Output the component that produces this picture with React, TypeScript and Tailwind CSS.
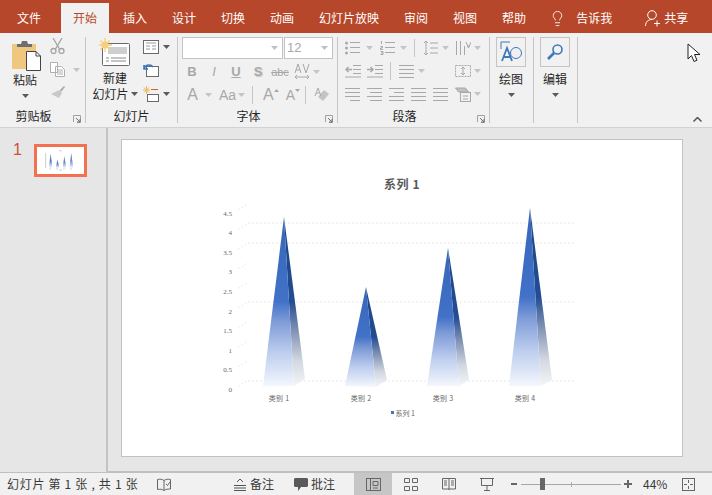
import { Fragment } from 'react';
import { Lightbulb } from 'lucide-react';

const tabs = ['插入', '设计', '切换', '动画', '幻灯片放映', '审阅', '视图', '帮助'];
const DIM = '#a8a8a8';
const SOFT = '#c4c4c4';

function Caret({ color = '#5a5a5a' }: { color?: string }) {
  return (
    <svg width="7" height="4" viewBox="0 0 7 4" className="shrink-0">
      <path d="M0 0h7L3.5 4z" fill={color} />
    </svg>
  );
}

function Lines({ w = 15, rows = [0, 4, 8, 12], insets = [] as number[] }) {
  return (
    <svg width={w} height="14" viewBox={`0 0 ${w} 14`}>
      {rows.map((y, i) => (
        <path key={y} d={`M${insets[i] ?? 0} ${y + 1.5}H${w}`} stroke={DIM} strokeWidth="1" />
      ))}
    </svg>
  );
}

function Bullets() {
  return (
    <svg width="15" height="14" viewBox="0 0 15 14" fill={DIM}>
      <circle cx="1.500" cy="2" r="1.500" />
      <circle cx="1.500" cy="7" r="1.500" />
      <circle cx="1.500" cy="12" r="1.500" />
      <path d="M5 1.500h10M5 6.500h10M5 11.500h10" stroke={DIM} fill="none" />
    </svg>
  );
}

function Numbers() {
  return (
    <svg width="15" height="14" viewBox="0 0 15 14" fill="none" stroke={DIM}>
      <path d="M1.500 0v3M.5 5.500h2v1.500h-2v1.500h2.500M.5 10.500h2.500v3H.5M1 12h2" />
      <path d="M5 1.500h10M5 6.500h10M5 11.500h10" />
    </svg>
  );
}

function Indent({ out }: { out?: boolean }) {
  return (
    <svg width="16" height="14" viewBox="0 0 16 14" fill="none" stroke={DIM}>
      <path d="M8 1.500h8M8 5.500h8M8 9.500h8M0 13h16" />
      {out ? (
        <path d="M7 5.500H1M3.500 3L1 5.500 3.500 8" strokeWidth="1.500" />
      ) : (
        <path d="M0 5.500h6M3.500 3L6 5.500 3.500 8" strokeWidth="1.500" />
      )}
    </svg>
  );
}

function Launcher() {
  return (
    <svg width="8" height="8" viewBox="0 0 8 8" className="absolute bottom-0 right-[4px]">
      <path d="M.5 7V.5H7.5V7.5H4" fill="none" stroke="#a0a0a0" />
      <path d="M3 3l4 4M7 4v3H4" fill="none" stroke="#707070" />
    </svg>
  );
}

function Group({ width, label, launcher, children }: { width: string; label?: string; launcher?: boolean; children: React.ReactNode }) {
  return (
    <div className={`relative flex h-[86px] shrink-0 flex-col border-r border-[#c6c6c6] ${width}`}>
      <div className="h-[68px] shrink-0">{children}</div>
      {label && (
        <div className={`pt-[3px] text-center text-[12px] leading-[16px] text-[#262626] ${launcher ? 'pr-[18px]' : ''}`}>{label}</div>
      )}
      {launcher && <Launcher />}
    </div>
  );
}

function Cell({ children }: { children: React.ReactNode }) {
  return <div className="flex h-full w-[22px] shrink-0 items-center justify-center">{children}</div>;
}

function PasteIcon() {
  return (
    <svg width="30" height="32" viewBox="0 0 30 32">
      <rect x="0" y="4" width="24" height="25" fill="#f0c77f" />
      <path d="M5 7V4h4l1-3h5l1 3h4v3z" fill="#6e6e6e" />
      <path d="M14.500 11.500H24l4.500 4.500V30.500H14.500z" fill="#fff" stroke="#444" />
      <path d="M24 11.500V16h4.500" fill="none" stroke="#444" />
    </svg>
  );
}

function NewSlideIcon() {
  return (
    <svg width="32" height="30" viewBox="0 0 32 30">
      <rect x="3.500" y="5.500" width="27" height="22" rx="1" fill="#fff" stroke="#6a6a6a" />
      <rect x="9" y="9" width="19" height="7" fill="#cfcfcf" />
      <path d="M7 20h3M12 20h15M7 23h3M12 23h15" stroke="#8a8a8a" />
      <circle cx="6" cy="7" r="3.500" fill="#f6cf7d" />
      <path d="M6 0v14M0 7h13M1.500 2.500l9 9M10.500 2.500l-9 9" stroke="#f6cf7d" strokeWidth="1.300" />
    </svg>
  );
}

const pyramids = [
  { apex: [284, 217], left: [263, 386], mid: [294, 386], right: [305, 379] },
  { apex: [366, 287], left: [345, 386], mid: [376, 387], right: [387, 380] },
  { apex: [448, 248], left: [427, 386], mid: [459, 386], right: [469, 380] },
  { apex: [530, 208], left: [509, 386], mid: [541, 386], right: [552, 380] },
];

const axis = ['4.5', '4', '3.5', '3', '2.5', '2', '1.5', '1', '0.5', '0'];
const cats = [
  ['类别 1', 279],
  ['类别 2', 361],
  ['类别 3', 443],
  ['类别 4', 525],
] as const;

function Chart({ className, mini }: { className: string; mini?: boolean }) {
  return (
    <svg viewBox="122 140 560 316" className={className}>
      {!mini && (
        <defs>
          <linearGradient id="pyr-blue" x1="0" y1="0" x2="0" y2="1">
            <stop offset="0" stopColor="#3566b8" />
            <stop offset="0.5" stopColor="#4272c8" />
            <stop offset="0.62" stopColor="#7f9cd8" />
            <stop offset="0.8" stopColor="#bccdee" />
            <stop offset="1" stopColor="#f4f7fd" />
          </linearGradient>
          <linearGradient id="pyr-dark" x1="0" y1="0" x2="0" y2="1">
            <stop offset="0" stopColor="#1d4488" />
            <stop offset="0.5" stopColor="#234c92" />
            <stop offset="0.66" stopColor="#7a8db0" />
            <stop offset="0.85" stopColor="#d2d7e0" />
            <stop offset="1" stopColor="#f4f5f7" />
          </linearGradient>
        </defs>
      )}
      {mini ? (
        <path d="M385 182h34M225 210v180M270 398h20M352 398h20M434 398h20M516 398h20M385 412h34" stroke="#8a8a8a" strokeWidth="5" />
      ) : (
        <Fragment>
          <text x="402" y="189" textAnchor="middle" fontSize="12" fontWeight="700" fill="#595959" letterSpacing=".6">
            系列 1
          </text>
          {[223, 243, 302, 381].map((y) => (
            <path key={y} d={`M248 ${y}H576`} stroke="#e8e8e8" strokeDasharray="2 2" />
          ))}
          {axis.map((t, i) => {
            const y = 213 + i * 19.6;
            return (
              <Fragment key={t}>
                <text x="232" y={y + 2.500} textAnchor="end" fontSize="7" fill="#666" fontFamily="'Liberation Serif', serif">
                  {t}
                </text>
                <path d={`M238 ${y - 3}L248 ${y - 9}`} stroke="#ececec" strokeDasharray="2 2" />
              </Fragment>
            );
          })}
          {cats.map(([t, x]) => (
            <text key={t} x={x} y="401" textAnchor="middle" fontSize="7" fill="#666" letterSpacing=".3">
              {t}
            </text>
          ))}
          <rect x="391" y="411" width="3" height="3" fill="#4472c4" />
          <text x="395.500" y="416" fontSize="7" fill="#666">
            系列 1
          </text>
        </Fragment>
      )}
      {pyramids.map((p) => (
        <g key={p.apex[0]}>
          <polygon points={`${p.apex} ${p.mid} ${p.right}`} fill="url(#pyr-dark)" />
          <polygon points={`${p.apex} ${p.left} ${p.mid}`} fill="url(#pyr-blue)" />
        </g>
      ))}
    </svg>
  );
}

export default function App() {
  return (
    <div
      className="flex h-[495px] w-[712px] flex-col overflow-hidden bg-[#e6e6e6] text-[#262626]"
      style={{ fontFamily: "'Noto Sans CJK SC', 'Noto Sans', sans-serif" }}
    >
      {/* title tabs */}
      <div className="flex h-[33px] shrink-0 items-end bg-[#b7472a] pl-[5px] text-[12px] text-white">
        <div className="mr-[8px] flex h-[30px] w-[48px] items-center justify-center">文件</div>
        <div className="mr-[2px] flex h-[30px] w-[48px] items-center justify-center bg-[#f1f1f1] text-[#b7472a]">开始</div>
        {tabs.map((t) => (
          <div key={t} className="mr-px flex h-[30px] items-center justify-center px-[12px]">
            {t}
          </div>
        ))}
        <div className="ml-[10px] flex h-[30px] items-center">
          <Lightbulb size={17} strokeWidth={1.2} />
        </div>
        <div className="ml-[10px] flex h-[30px] items-center">告诉我</div>
        <div className="ml-[33px] flex h-[30px] items-center">
          <svg width="16" height="17" viewBox="0 0 16 17" fill="none" stroke="#fff">
            <circle cx="7" cy="5" r="4.300" />
            <path d="M.5 16c0-4 2.500-6.500 6.500-6.500M9 13.500h6M12 10.500v6" />
          </svg>
        </div>
        <div className="ml-[3px] flex h-[30px] items-center">共享</div>
      </div>

      {/* ribbon */}
      <div className="relative flex h-[95px] shrink-0 items-start border-b border-[#d2d2d2] bg-[#f1f1f1] pt-[4px]">
        <Group width="w-[86px]" label="剪贴板" launcher>
          <div className="flex">
            <div className="ml-[12px] flex w-[30px] flex-col items-center pt-[3px]">
              <PasteIcon />
              <div className="ml-[-4px] mt-[-1px] text-[12px] leading-[18px]">粘贴</div>
              <div className="ml-[-4px] mt-[5px]"><Caret /></div>
            </div>
            <div className="ml-[8px] flex flex-col gap-[8px] pt-[1px]">
              <svg width="15" height="16" viewBox="0 0 15 16" fill="none" stroke="#a4a4a4" strokeWidth="1.300">
                <path d="M3 0l6.500 11M12 0L5.500 11" />
                <circle cx="3.500" cy="13" r="2.500" />
                <circle cx="11.500" cy="13" r="2.500" />
              </svg>
              <div className="flex items-center gap-[7px]">
                <svg width="16" height="15" viewBox="0 0 16 15" fill="#fff" stroke="#b0b0b0">
                  <path d="M.5.5h7v10h-7zM5.500 4.500h6l3 3v7h-9z" />
                  <path d="M7 8h6M7 10h6M7 12h6" />
                </svg>
                <Caret color="#c4c4c4" />
              </div>
              <svg width="16" height="15" viewBox="0 0 16 15">
                <path d="M9 5l3 3-3 5L1 9z" fill="#c8c8c8" />
                <path d="M10 5l4-4 1 1-4 5z" fill="#a8a8a8" />
              </svg>
            </div>
          </div>
        </Group>

        <Group width="w-[92px]" label="幻灯片">
          <div className="flex">
            <div className="ml-[6px] flex w-[46px] flex-col items-center pt-[1px]">
              <NewSlideIcon />
              <div className="mt-[2px] text-[12px] leading-[16px]">新建</div>
              <div className="flex items-center gap-[2px] whitespace-nowrap text-[12px] leading-[16px]">
                幻灯片
                <Caret />
              </div>
            </div>
            <div className="ml-[5px] flex flex-col gap-[9px] pt-[3px]">
              <div className="flex items-center gap-[4px]">
                <svg width="16" height="14" viewBox="0 0 16 14" fill="#fff" stroke="#6a6a6a">
                  <rect x=".5" y=".5" width="15" height="13" />
                  <path d="M3 3h10M3 6h4M3 9h4M9 6h4M9 9h4" stroke="#9a9a9a" />
                </svg>
                <Caret />
              </div>
              <svg width="16" height="14" viewBox="0 0 16 14" fill="none">
                <rect x="3.500" y="3.500" width="12" height="10" fill="#fff" stroke="#6a6a6a" />
                <path d="M1 6c1-5 7-5 9-2M1 2v4h4" stroke="#3f77bb" strokeWidth="1.600" />
              </svg>
              <div className="flex items-center gap-[4px]">
                <svg width="16" height="16" viewBox="0 0 16 16" fill="none">
                  <path d="M3.500 0v8M0 4h7M1 1.500l5 5M6 1.500l-5 5" stroke="#f3b85a" />
                  <path d="M8 3.500h7M4.500 8.500h11" stroke="#d2622a" />
                  <rect x="4.500" y="8.500" width="11" height="7" fill="#fff" stroke="#6a6a6a" />
                </svg>
                <Caret />
              </div>
            </div>
          </div>
        </Group>

        <Group width="w-[160px]" label="字体" launcher>
          <div className="ml-[4px] flex h-[22px]">
            <div className="flex w-[101px] items-center justify-end border border-[#c4c4c4] bg-white pr-[4px]">
              <Caret color="#c0c0c0" />
            </div>
            <div className="ml-px flex w-[49px] items-center justify-between border border-[#c4c4c4] bg-white pl-[2px] pr-[4px] text-[13px] text-[#a8a8a8]" style={{ fontFamily: "'Liberation Sans', sans-serif" }}>
              12
              <Caret color="#c0c0c0" />
            </div>
          </div>
          <div className="ml-[3px] mt-[2px] flex h-[22px] items-center text-[13px] font-bold text-[#a8a8a8]" style={{ fontFamily: "'Liberation Sans', sans-serif" }}>
            <Cell>B</Cell>
            <Cell><span className="font-normal italic">I</span></Cell>
            <Cell><span className="underline">U</span></Cell>
            <Cell><span className="[text-shadow:1px_1px_1px_#c8c8c8]">S</span></Cell>
            <Cell><span className="text-[11px] font-normal line-through">abc</span></Cell>
            <Cell>
              <svg width="16" height="18" viewBox="0 0 16 18" fill="none" stroke={DIM}>
                <path d="M1 10l3-9 3 9M2 7h4M9 1l3 9 3-9M1 14h14M3 12l-2 2 2 2M13 12l2 2-2 2" />
              </svg>
            </Cell>
            <Caret color={SOFT} />
          </div>
          <div className="ml-[5px] mt-px flex h-[22px] items-center text-[#a8a8a8]" style={{ fontFamily: "'Liberation Sans', sans-serif" }}>
            <span className="w-[19px] text-center text-[16px]">A</span>
            <span className="ml-[3px]"><Caret color={SOFT} /></span>
            <span className="ml-[7px] w-[16px] text-center text-[14px]">Aa</span>
            <span className="ml-[3px]"><Caret color={SOFT} /></span>
            <div className="ml-[7px] h-[18px] w-px bg-[#c6c6c6]" />
            <span className="ml-[10px] text-[16px]">A</span>
            <svg width="5" height="3" viewBox="0 0 5 3" className="mb-[10px]"><path d="M0 3h5L2.500 0z" fill={DIM} /></svg>
            <span className="ml-[7px] text-[14px]">A</span>
            <svg width="5" height="3" viewBox="0 0 5 3" className="mb-[10px]"><path d="M0 0h5L2.500 3z" fill={DIM} /></svg>
            <div className="ml-[5px] h-[18px] w-px bg-[#c6c6c6]" />
            <svg width="16" height="16" viewBox="0 0 16 16" className="ml-[8px]">
              <path d="M10 3l5 4-6 7-5-4z" fill="#c4c4c4" />
              <path d="M1 9l3-8 3 8M2 6h4" fill="none" stroke={DIM} />
            </svg>
          </div>
        </Group>

        <Group width="w-[152px]" label="段落" launcher>
          <div className="flex h-[22px] items-center pl-[7px]">
            <Bullets />
            <span className="ml-[6px]"><Caret color={SOFT} /></span>
            <span className="ml-[7px]"><Numbers /></span>
            <span className="ml-[5px]"><Caret color={SOFT} /></span>
            <div className="ml-[7px] h-[18px] w-px bg-[#c6c6c6]" />
            <svg width="15" height="16" viewBox="0 0 15 16" className="ml-[8px]" fill="none" stroke={DIM}>
              <path d="M3 1v14M1 3l2-2 2 2M1 13l2 2 2-2M7 3h8M7 8h8M7 13h8" />
            </svg>
            <span className="ml-[4px]"><Caret color={SOFT} /></span>
            <svg width="16" height="16" viewBox="0 0 16 16" className="ml-[6px]" fill="none" stroke={DIM}>
              <path d="M1.500 1v14M5.500 1v14M9.500 6v9M11 2l2.500 6L16 2M12 6h3" />
            </svg>
            <span className="ml-[3px]"><Caret color={SOFT} /></span>
          </div>
          <div className="mt-[1px] flex h-[22px] items-center pl-[7px]">
            <Indent out />
            <span className="ml-[6px]"><Indent /></span>
            <div className="ml-[7px] h-[18px] w-px bg-[#c6c6c6]" />
            <span className="ml-[8px]"><Lines /></span>
            <span className="ml-[4px]"><Caret color={SOFT} /></span>
            <svg width="16" height="16" viewBox="0 0 16 16" className="ml-[30px]" fill="none" stroke={DIM}>
              <rect x=".5" y="2.500" width="15" height="11" strokeDasharray="2 1" />
              <path d="M8 4v8M6 6l2-2 2 2M6 10l2 2 2-2" />
            </svg>
            <span className="ml-[3px]"><Caret color={SOFT} /></span>
          </div>
          <div className="flex h-[24px] items-center gap-[7px] pl-[7px]">
            <Lines insets={[0, 0, 0, 5]} />
            <Lines insets={[0, 3, 0, 3]} />
            <Lines insets={[0, 5, 0, 0]} />
            <Lines />
            <Lines w={15} />
            <svg width="16" height="16" viewBox="0 0 16 16" fill="none" stroke={DIM}>
              <path d="M.5 2h10l3 4H3.500z" fill="#c0c0c0" />
              <rect x="5.500" y="6.500" width="10" height="9" fill="#f1f1f1" />
              <path d="M8 10h5M8 13h5" />
            </svg>
            <span className="ml-[-4px]"><Caret color={SOFT} /></span>
          </div>
        </Group>

        <Group width="w-[44px]">
          <div className="flex flex-col items-center pr-px">
            <div className="flex h-[30px] w-[30px] items-center justify-center border border-[#c4c4c4]">
              <svg width="22" height="22" viewBox="0 0 22 22" fill="none" stroke="#3f77bb">
                <path d="M1 8V1h9" />
                <circle cx="16" cy="12" r="5.500" />
                <path d="M2 20l5-13 5 13M4 16h6" strokeWidth="1.800" />
              </svg>
            </div>
            <div className="mt-[4px] text-[12px] leading-[16px]">绘图</div>
            <div className="mt-[6px]"><Caret /></div>
          </div>
        </Group>

        <Group width="w-[44px]">
          <div className="flex flex-col items-center pr-px">
            <div className="flex h-[30px] w-[30px] items-center justify-center border border-[#c4c4c4]">
              <svg width="18" height="18" viewBox="0 0 18 18" fill="none" stroke="#3f77bb">
                <circle cx="11.500" cy="6.500" r="4.500" strokeWidth="1.600" />
                <path d="M8 10l-6 6" strokeWidth="2.600" />
              </svg>
            </div>
            <div className="mt-[4px] text-[12px] leading-[16px]">编辑</div>
            <div className="mt-[6px]"><Caret /></div>
          </div>
        </Group>

        <svg width="9" height="5" viewBox="0 0 9 5" className="absolute bottom-[5px] right-[10px]" fill="none" stroke="#555" strokeWidth="1.500">
          <path d="M.5 4.500l4-4 4 4" />
        </svg>
        <svg width="14" height="20" viewBox="0 0 14 20" className="absolute right-[11px] top-[10px]">
          <path d="M1 1v15l3.500-3.500L7 18.500l3-1.300L7.500 11.500H13z" fill="#fff" stroke="#222" />
        </svg>
      </div>

      {/* workspace */}
      <div className="flex h-[345px] shrink-0 border-b border-[#c0c0c0]">
        <div className="flex w-[108px] shrink-0 items-start border-r-2 border-[#c4c4c4] pl-[13px] pt-[14px]">
          <div className="w-[21px] text-[16px] leading-[16px] text-[#c8543a]" style={{ fontFamily: "'Liberation Sans', sans-serif" }}>1</div>
          <div className="mt-[2px] border-[3px] border-[#f37150] bg-white">
            <Chart mini className="block h-[27px] w-[47px]" />
          </div>
        </div>
        <div className="flex-1">
          <div className="ml-[13px] mt-[11px] h-[318px] w-[562px] border border-[#c2c2c2] bg-white">
            <Chart className="block h-full w-full" />
          </div>
          <div className="mt-[14px] border-t border-[#c0c0c0]" />
        </div>
      </div>

      {/* status bar */}
      <div className="flex flex-1 items-center bg-[#f1f1f1] text-[12px] text-[#3a3a3a]">
        <span className="ml-[7px] w-[130px] whitespace-pre tracking-[.7px]">幻灯片 第 1 张 , 共 1 张</span>
        <svg width="14" height="13" viewBox="0 0 14 13" className="ml-[20px]" fill="none" stroke="#666">
          <path d="M7 2.500C5 1 3 1 .5 1.500v10C3 11 5 11 7 12.500V2.500zM7 2.500C9 1 11 1 13.500 1.500V11c-2.500 0-4.500 0-6.500 1.500" />
          <path d="M9 6l1.500 1.500L13 4" />
        </svg>
        <svg width="12" height="13" viewBox="0 0 12 13" className="ml-[63px]" fill="none" stroke="#555">
          <path d="M3 4l3-3 3 3M0 7.500h12M0 10h12M0 12.500h12" />
        </svg>
        <span className="ml-[4px]">备注</span>
        <svg width="14" height="13" viewBox="0 0 14 13" className="ml-[20px]">
          <path d="M1 0h12l1 1v7l-1 1H7l-3 4V9H1L0 8V1z" fill="#5a5a5a" />
        </svg>
        <span className="ml-[3px]">批注</span>
        <div className="ml-[19px] flex h-full w-[38px] items-center justify-center bg-[#c6c6c6]">
          <svg width="15" height="13" viewBox="0 0 15 13" fill="none" stroke="#666">
            <rect x=".5" y=".5" width="14" height="12" />
            <path d="M4.500 1v11M7 3.500h5v4H7zM7 10h5" />
          </svg>
        </div>
        <svg width="14" height="13" viewBox="0 0 14 13" className="ml-[12px]" fill="none" stroke="#666">
          <path d="M.5.500h5v4h-5zM8.500.500h5v4h-5zM.5 8.500h5v4h-5zM8.500 8.500h5v4h-5z" />
        </svg>
        <svg width="14" height="13" viewBox="0 0 14 13" className="ml-[24px]" fill="none" stroke="#666">
          <path d="M.5.500H7l6.500 0V11H.5zM7 .5V12M2 3h3M2 5h3M2 7h3M9 3h3M9 5h3M9 7h3" />
        </svg>
        <svg width="14" height="13" viewBox="0 0 14 13" className="ml-[24px]" fill="none" stroke="#666">
          <path d="M0 .5h14M1.500 1v6.500h11V1M7 8v4M4 12.500h6" />
        </svg>
        <div className="ml-[17px] h-[2px] w-[6px] bg-[#666]" />
        <div className="relative ml-[4px] h-px w-[100px] bg-[#a6a6a6]">
          <div className="absolute left-[19px] top-[-6px] h-[12px] w-[5px] bg-[#666]" />
          <div className="absolute left-[50px] top-[-2px] h-[5px] w-px bg-[#b0b0b0]" />
        </div>
        <svg width="8" height="8" viewBox="0 0 8 8" className="ml-[3px]">
          <path d="M0 4h8M4 0v8" stroke="#666" strokeWidth="2" />
        </svg>
        <span className="ml-[11px] w-[26px]">44%</span>
        <svg width="13" height="13" viewBox="0 0 13 13" className="ml-[13px]" fill="none" stroke="#666">
          <rect x=".5" y=".5" width="12" height="12" />
          <path d="M6.500 2v3M6.500 8v3M2 6.500h3M8 6.500h3" />
        </svg>
      </div>
    </div>
  );
}
